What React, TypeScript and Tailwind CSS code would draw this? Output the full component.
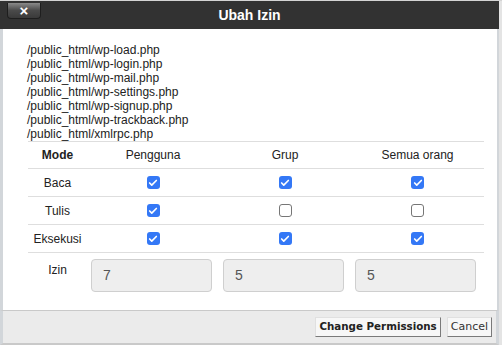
import { Check } from "lucide-react";

const files = [
  "/public_html/wp-load.php",
  "/public_html/wp-login.php",
  "/public_html/wp-mail.php",
  "/public_html/wp-settings.php",
  "/public_html/wp-signup.php",
  "/public_html/wp-trackback.php",
  "/public_html/xmlrpc.php",
];

const rows = [
  { label: "Baca", values: [true, true, true] },
  { label: "Tulis", values: [true, false, false] },
  { label: "Eksekusi", values: [true, true, true] },
];

const Box = ({ checked }: { checked: boolean }) =>
  checked ? (
    <span className="flex h-[13px] w-[13px] items-center justify-center rounded-[3px] bg-[#3478f6]">
      <Check className="h-[10px] w-[10px] text-white" strokeWidth={4} />
    </span>
  ) : (
    <span className="h-[13px] w-[13px] rounded-[3px] border border-[#767676] bg-white" />
  );

const App = () => {
  return (
    <div className="flex h-[345px] w-[502px] border-t border-[#d4d4d4] bg-[#e4e4e4] font-['Liberation_Sans',Arial,sans-serif] text-[12px] text-[#222]">
      <div className="flex w-[499px] flex-col">
        {/* Title bar */}
        <div className="relative flex h-[28px] items-center justify-center bg-[#323232]">
          <button className="absolute left-[7px] top-[2px] flex h-[16px] w-[34px] items-center justify-center rounded-b-[4px] border border-t-0 border-[#1e1e1e] bg-gradient-to-b from-[#8a8a8a] via-[#4a4a4a] to-[#3a3a3a] text-[15px] font-bold leading-none text-white">
            ×
          </button>
          <span className="text-[14px] font-bold text-white">Ubah Izin</span>
        </div>

        {/* Body */}
        <div className="flex flex-1 flex-col border-l-[3px] border-r-[2px] border-[#d2d6da] bg-white">
          <div className="pl-[24px] pt-[14px] leading-[14px]">
            {files.map((f) => (
              <div key={f}>{f}</div>
            ))}
          </div>

          <div className="ml-[25px] w-[456px] text-[12px]">
            <div className="grid h-[28px] grid-cols-[59px_132px_132px_133px] items-center border-y border-[#dedede] text-center">
              <span className="font-bold">Mode</span>
              <span>Pengguna</span>
              <span>Grup</span>
              <span>Semua orang</span>
            </div>
            {rows.map((r) => (
              <div
                key={r.label}
                className="grid h-[28px] grid-cols-[59px_132px_132px_133px] items-center border-b border-[#dedede] text-center"
              >
                <span>{r.label}</span>
                {r.values.map((v, i) => (
                  <span key={i} className="flex justify-center">
                    <Box checked={v} />
                  </span>
                ))}
              </div>
            ))}
            <div className="grid grid-cols-[59px_132px_132px_133px] pt-[6px]">
              <span className="pt-[2px] text-center">Izin</span>
              {["7", "5", "5"].map((n, i) => (
                <div key={i} className="pl-[4px]">
                  <div className="flex h-[33px] w-[121px] items-center rounded-[4px] border border-[#cfcfcf] bg-[#eeeeee] pl-[11px] text-[14px] text-[#555]">
                    {n}
                  </div>
                </div>
              ))}
            </div>
          </div>
        </div>

        {/* Footer */}
        <div className="flex h-[35px] items-center justify-end gap-[6px] border-x-[3px] border-t border-b-[2px] border-[#c9c9c9] border-x-[#d2d6da] bg-[#ebebeb] pr-[4px] font-['DejaVu_Sans',Verdana,sans-serif] text-[11px] text-[#222]">
          <button className="h-[20px] border border-[#e0e0e0] border-b-[#7a7a7a] border-r-[#7a7a7a] bg-[#f7f7f7] px-[3px] text-[10.3px] font-bold">
            Change Permissions
          </button>
          <button className="h-[20px] border border-[#e0e0e0] border-b-[#7a7a7a] border-r-[#7a7a7a] bg-[#f7f7f7] px-[3px] text-[#333]">
            Cancel
          </button>
        </div>
      </div>
    </div>
  );
};

export default App;
